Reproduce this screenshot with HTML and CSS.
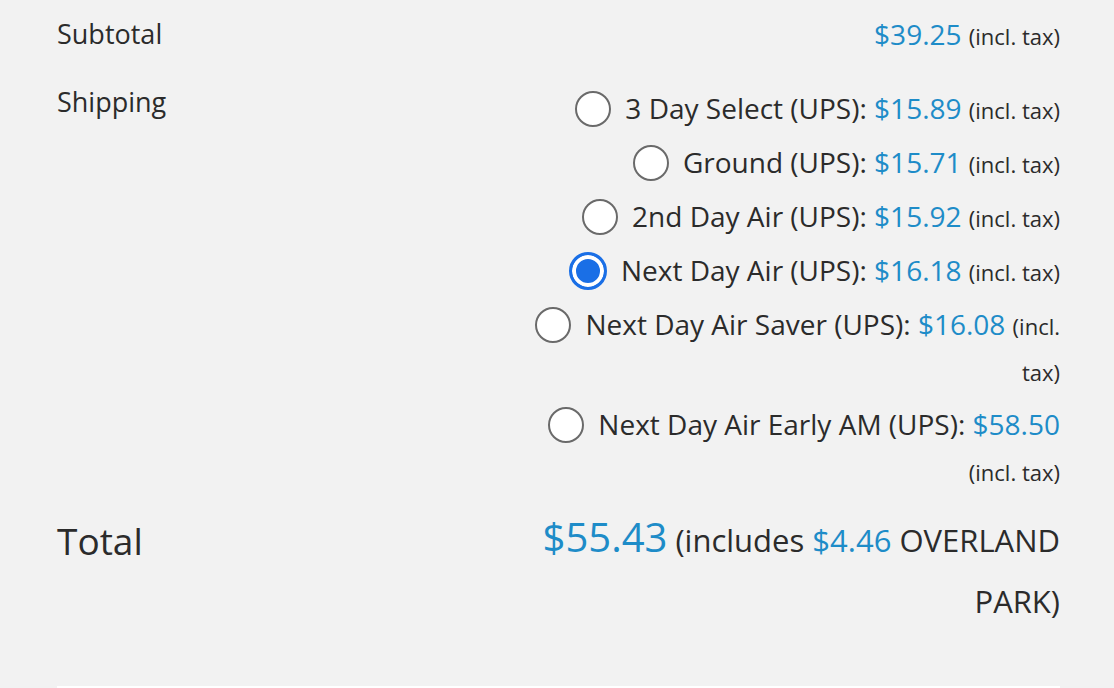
FILE: index.html
```html
<!DOCTYPE html>
<html lang="en">

<head>
    <meta charset="UTF-8" />
    <meta name="viewport" content="width=device-width, initial-scale=1.0" />
    <title>Cart totals</title>
    <link rel="stylesheet" href="styles.css">
</head>

<body>
    <div class="cart-totals">
        <!-- 小计 -->
        <div class="row subtotal">
            <div class="label">Subtotal</div>
            <div class="value">
                <span class="amount">$39.25</span> <small class="tax">(incl. tax)</small>
            </div>
        </div>
        <!-- 运费选项 -->
        <div class="row shipping">
            <div class="label">Shipping</div>
            <div class="value">
                <ul class="methods">
                    <li>
                        <input type="radio" name="ship" id="m1">
                        <label for="m1">3 Day Select (UPS): <span class="amount">$15.89</span> <small class="tax">(incl. tax)</small></label>
                    </li>
                    <li>
                        <input type="radio" name="ship" id="m2">
                        <label for="m2">Ground (UPS): <span class="amount">$15.71</span> <small class="tax">(incl. tax)</small></label>
                    </li>
                    <li>
                        <input type="radio" name="ship" id="m3">
                        <label for="m3">2nd Day Air (UPS): <span class="amount">$15.92</span> <small class="tax">(incl. tax)</small></label>
                    </li>
                    <li>
                        <input type="radio" name="ship" id="m4" checked>
                        <label for="m4">Next Day Air (UPS): <span class="amount">$16.18</span> <small class="tax">(incl. tax)</small></label>
                    </li>
                    <li>
                        <input type="radio" name="ship" id="m5">
                        <label for="m5">Next Day Air Saver (UPS): <span class="amount">$16.08</span> <small class="tax">(incl. tax)</small></label>
                    </li>
                    <li>
                        <input type="radio" name="ship" id="m6">
                        <label for="m6">Next Day Air Early AM (UPS): <span class="amount">$58.50</span> <small class="tax">(incl. tax)</small></label>
                    </li>
                </ul>
            </div>
        </div>
        <!-- 总计 -->
        <div class="row total">
            <div class="label">Total</div>
            <div class="value">
                <span class="amount big">$55.43</span> <small class="includes">(includes <span class="amount">$4.46</span> OVERLAND PARK)</small>
            </div>
        </div>
        <div class="bottom-box"></div>
    </div>
</body>

</html>
```

FILE: styles.css
```css
* {
    margin: 0;
    padding: 0;
    box-sizing: border-box;
}

body {
    background-color: #f2f2f2;
    font-family: "Open Sans", "Liberation Sans", sans-serif;
    font-weight: 500;
    color: #2b2b2b;
    overflow: hidden;
}

li {
    list-style: none;
}

.cart-totals {
    padding: 0 54px 0 57px;
}

.row {
    display: grid;
    grid-template-columns: 1fr 532px;
}

.label {
    font-size: 27px;
}

.value {
    text-align: right;
}

.amount {
    color: #1e8cc8;
}

.tax {
    font-size: 22px;
    line-height: 1;
}

.subtotal {
    padding-top: 11px;
    line-height: 46px;
    font-size: 28px;
}

.shipping {
    padding-top: 28px;
    font-size: 28px;
    line-height: 46px;
}

.shipping .label {
    line-height: 34px;
}

.methods li {
    margin-bottom: 8px;
}

.methods input {
    appearance: none;
    -webkit-appearance: none;
    width: 36px;
    height: 36px;
    border: 2px solid #6a6a6a;
    border-radius: 50%;
    background-color: #fff;
    vertical-align: middle;
    margin: -6px 7px 0 0;
}

.methods input:checked {
    width: 38px;
    height: 38px;
    border: 3px solid #1a6fe6;
    background-color: #1a6fe6;
    box-shadow: inset 0 0 0 4px #fff;
}

.total {
    padding-top: 9px;
    line-height: 61px;
}

.total .label {
    font-size: 37px;
}

.total .value {
    font-size: 31px;
}

.big {
    font-size: 40px;
    line-height: 1;
}

.includes {
    font-size: 31px;
}

.bottom-box {
    margin-top: 54px;
    height: 2px;
    background-color: #fff;
}
```
